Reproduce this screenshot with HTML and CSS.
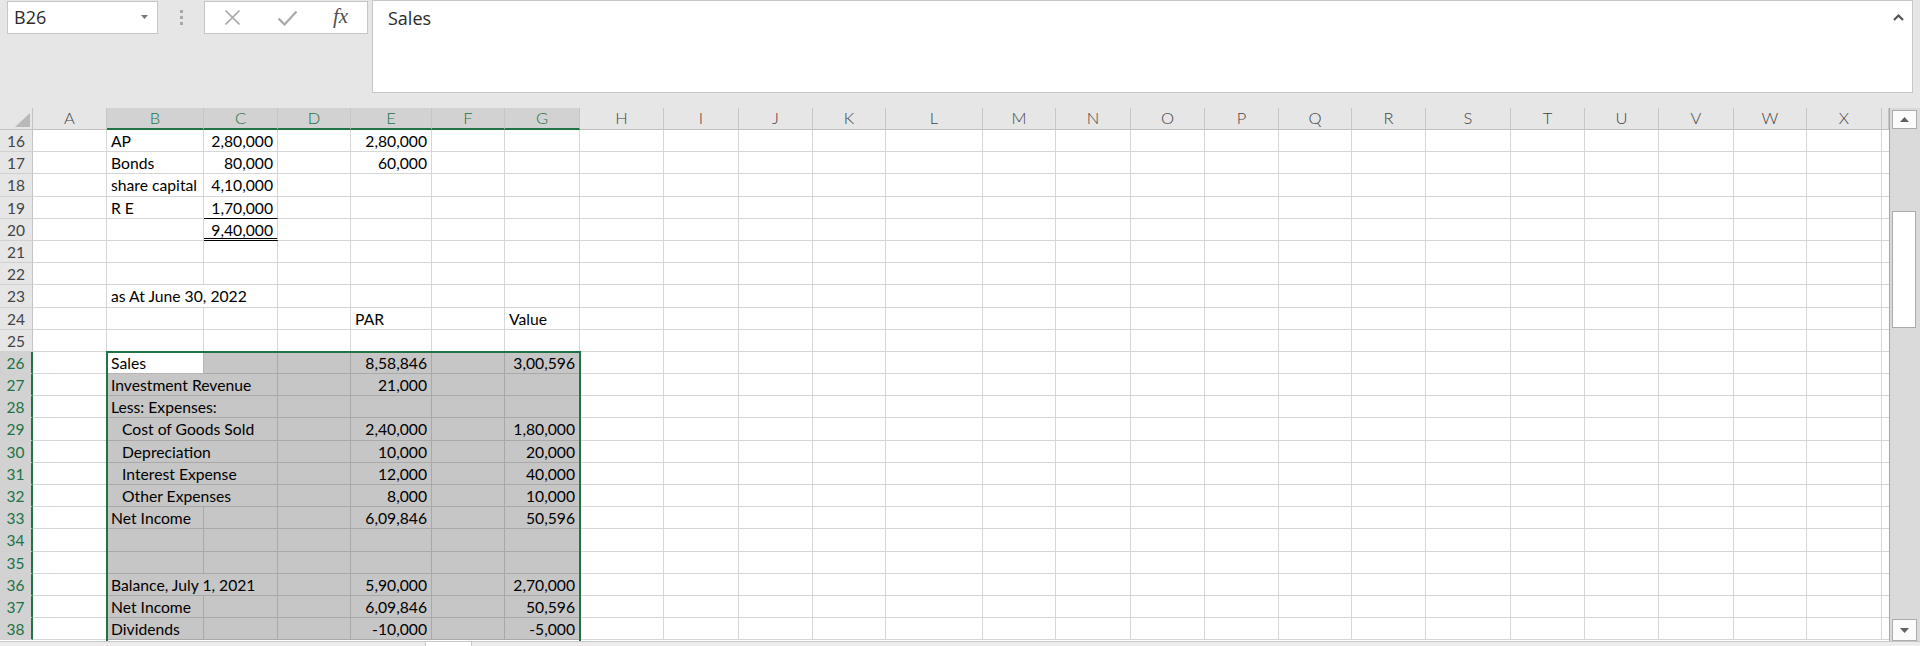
FILE: index.html
```html
<!DOCTYPE html>
<html lang="en">
<head>
<meta charset="utf-8">
<title>Excel - B26</title>
<link rel="stylesheet" href="styles.css">
</head>
<body>
<div class="app">
  <div class="toolbar">
    <div class="namebox">
      <span class="nb-val">B26</span>
      <svg class="caret" width="7" height="4" viewBox="0 0 7 4"><path d="M0 0h7L3.5 4z" fill="#777"/></svg>
    </div>
    <div class="grip"><b></b><b></b><b></b></div>
    <div class="btns">
      <div class="slot s1"><svg width="17" height="17" viewBox="0 0 17 17"><path d="M1.5 1.5l14 14M15.5 1.5l-14 14" stroke="#a8a8a8" stroke-width="1.7" fill="none"/></svg></div>
      <div class="slot s2"><svg width="21" height="16" viewBox="0 0 21 16"><path d="M1.5 8.5l6 6L19.5 1.5" stroke="#a8a8a8" stroke-width="2.2" fill="none"/></svg></div>
      <div class="slot s3"><span class="fx">fx</span></div>
    </div>
    <div class="formula">
      <span class="f-val">Sales</span>
      <svg class="chev" width="11" height="7" viewBox="0 0 11 7"><path d="M1 6l4.5-4.5L10 6" stroke="#555" stroke-width="2.2" fill="none"/></svg>
    </div>
  </div>

  <div class="main">
    <div class="sheet">
      <div class="corner"><svg width="15" height="14" viewBox="0 0 15 14"><path d="M15 0V14H0z" fill="#b9b9b9"/></svg></div>
      <div class="ch">A</div><div class="ch on">B</div><div class="ch on">C</div><div class="ch on">D</div><div class="ch on">E</div><div class="ch on">F</div><div class="ch on">G</div><div class="ch">H</div><div class="ch">I</div><div class="ch">J</div><div class="ch">K</div><div class="ch">L</div><div class="ch">M</div><div class="ch">N</div><div class="ch">O</div><div class="ch">P</div><div class="ch">Q</div><div class="ch">R</div><div class="ch">S</div><div class="ch">T</div><div class="ch">U</div><div class="ch">V</div><div class="ch">W</div><div class="ch">X</div><div class="ch"></div>

      <div class="rh">16</div><div></div><div>AP</div><div class="n">2,80,000</div><div></div><div class="n">2,80,000</div><div></div><div></div><div></div><div></div><div></div><div></div><div></div><div></div><div></div><div></div><div></div><div></div><div></div><div></div><div></div><div></div><div></div><div></div><div></div><div></div>
      <div class="rh">17</div><div></div><div>Bonds</div><div class="n">80,000</div><div></div><div class="n">60,000</div><div></div><div></div><div></div><div></div><div></div><div></div><div></div><div></div><div></div><div></div><div></div><div></div><div></div><div></div><div></div><div></div><div></div><div></div><div></div><div></div>
      <div class="rh">18</div><div></div><div>share capital</div><div class="n">4,10,000</div><div></div><div></div><div></div><div></div><div></div><div></div><div></div><div></div><div></div><div></div><div></div><div></div><div></div><div></div><div></div><div></div><div></div><div></div><div></div><div></div><div></div><div></div>
      <div class="rh">19</div><div></div><div>R E</div><div class="n u1">1,70,000</div><div></div><div></div><div></div><div></div><div></div><div></div><div></div><div></div><div></div><div></div><div></div><div></div><div></div><div></div><div></div><div></div><div></div><div></div><div></div><div></div><div></div><div></div>
      <div class="rh">20</div><div></div><div></div><div class="n u2">9,40,000</div><div></div><div></div><div></div><div></div><div></div><div></div><div></div><div></div><div></div><div></div><div></div><div></div><div></div><div></div><div></div><div></div><div></div><div></div><div></div><div></div><div></div><div></div>
      <div class="rh">21</div><div></div><div></div><div></div><div></div><div></div><div></div><div></div><div></div><div></div><div></div><div></div><div></div><div></div><div></div><div></div><div></div><div></div><div></div><div></div><div></div><div></div><div></div><div></div><div></div><div></div>
      <div class="rh">22</div><div></div><div></div><div></div><div></div><div></div><div></div><div></div><div></div><div></div><div></div><div></div><div></div><div></div><div></div><div></div><div></div><div></div><div></div><div></div><div></div><div></div><div></div><div></div><div></div><div></div>
      <div class="rh">23</div><div></div><div class="w2">as At June 30, 2022</div><div></div><div></div><div></div><div></div><div></div><div></div><div></div><div></div><div></div><div></div><div></div><div></div><div></div><div></div><div></div><div></div><div></div><div></div><div></div><div></div><div></div><div></div>
      <div class="rh">24</div><div></div><div></div><div></div><div></div><div>PAR</div><div></div><div>Value</div><div></div><div></div><div></div><div></div><div></div><div></div><div></div><div></div><div></div><div></div><div></div><div></div><div></div><div></div><div></div><div></div><div></div><div></div>
      <div class="rh">25</div><div></div><div></div><div></div><div></div><div></div><div></div><div></div><div></div><div></div><div></div><div></div><div></div><div></div><div></div><div></div><div></div><div></div><div></div><div></div><div></div><div></div><div></div><div></div><div></div><div></div>

      <div class="rh on">26</div><div></div><div class="act">Sales</div><div class="sel"></div><div class="sel"></div><div class="sel n">8,58,846</div><div class="sel"></div><div class="sel n">3,00,596</div><div></div><div></div><div></div><div></div><div></div><div></div><div></div><div></div><div></div><div></div><div></div><div></div><div></div><div></div><div></div><div></div><div></div><div></div>
      <div class="rh on">27</div><div></div><div class="sel w2">Investment Revenue</div><div class="sel"></div><div class="sel n">21,000</div><div class="sel"></div><div class="sel"></div><div></div><div></div><div></div><div></div><div></div><div></div><div></div><div></div><div></div><div></div><div></div><div></div><div></div><div></div><div></div><div></div><div></div><div></div>
      <div class="rh on">28</div><div></div><div class="sel w2">Less: Expenses:</div><div class="sel"></div><div class="sel"></div><div class="sel"></div><div class="sel"></div><div></div><div></div><div></div><div></div><div></div><div></div><div></div><div></div><div></div><div></div><div></div><div></div><div></div><div></div><div></div><div></div><div></div><div></div>
      <div class="rh on">29</div><div></div><div class="sel w2 ind">Cost of Goods Sold</div><div class="sel"></div><div class="sel n">2,40,000</div><div class="sel"></div><div class="sel n">1,80,000</div><div></div><div></div><div></div><div></div><div></div><div></div><div></div><div></div><div></div><div></div><div></div><div></div><div></div><div></div><div></div><div></div><div></div><div></div>
      <div class="rh on">30</div><div></div><div class="sel w2 ind">Depreciation</div><div class="sel"></div><div class="sel n">10,000</div><div class="sel"></div><div class="sel n">20,000</div><div></div><div></div><div></div><div></div><div></div><div></div><div></div><div></div><div></div><div></div><div></div><div></div><div></div><div></div><div></div><div></div><div></div><div></div>
      <div class="rh on">31</div><div></div><div class="sel w2 ind">Interest Expense</div><div class="sel"></div><div class="sel n">12,000</div><div class="sel"></div><div class="sel n">40,000</div><div></div><div></div><div></div><div></div><div></div><div></div><div></div><div></div><div></div><div></div><div></div><div></div><div></div><div></div><div></div><div></div><div></div><div></div>
      <div class="rh on">32</div><div></div><div class="sel w2 ind">Other Expenses</div><div class="sel"></div><div class="sel n">8,000</div><div class="sel"></div><div class="sel n">10,000</div><div></div><div></div><div></div><div></div><div></div><div></div><div></div><div></div><div></div><div></div><div></div><div></div><div></div><div></div><div></div><div></div><div></div><div></div>
      <div class="rh on">33</div><div></div><div class="sel">Net Income</div><div class="sel"></div><div class="sel"></div><div class="sel n">6,09,846</div><div class="sel"></div><div class="sel n">50,596</div><div></div><div></div><div></div><div></div><div></div><div></div><div></div><div></div><div></div><div></div><div></div><div></div><div></div><div></div><div></div><div></div><div></div><div></div>
      <div class="rh on">34</div><div></div><div class="sel"></div><div class="sel"></div><div class="sel"></div><div class="sel"></div><div class="sel"></div><div class="sel"></div><div></div><div></div><div></div><div></div><div></div><div></div><div></div><div></div><div></div><div></div><div></div><div></div><div></div><div></div><div></div><div></div><div></div><div></div>
      <div class="rh on">35</div><div></div><div class="sel"></div><div class="sel"></div><div class="sel"></div><div class="sel"></div><div class="sel"></div><div class="sel"></div><div></div><div></div><div></div><div></div><div></div><div></div><div></div><div></div><div></div><div></div><div></div><div></div><div></div><div></div><div></div><div></div><div></div><div></div>
      <div class="rh on">36</div><div></div><div class="sel w2">Balance, July 1, 2021</div><div class="sel"></div><div class="sel n">5,90,000</div><div class="sel"></div><div class="sel n">2,70,000</div><div></div><div></div><div></div><div></div><div></div><div></div><div></div><div></div><div></div><div></div><div></div><div></div><div></div><div></div><div></div><div></div><div></div><div></div>
      <div class="rh on">37</div><div></div><div class="sel">Net Income</div><div class="sel"></div><div class="sel"></div><div class="sel n">6,09,846</div><div class="sel"></div><div class="sel n">50,596</div><div></div><div></div><div></div><div></div><div></div><div></div><div></div><div></div><div></div><div></div><div></div><div></div><div></div><div></div><div></div><div></div><div></div><div></div>
      <div class="rh on">38</div><div></div><div class="sel">Dividends</div><div class="sel"></div><div class="sel"></div><div class="sel n">-10,000</div><div class="sel"></div><div class="sel n">-5,000</div><div></div><div></div><div></div><div></div><div></div><div></div><div></div><div></div><div></div><div></div><div></div><div></div><div></div><div></div><div></div><div></div><div></div><div></div>

      <span class="selbox"></span>
    </div>
    <div class="vscroll">
      <div class="sb-btn up"><svg width="9" height="5" viewBox="0 0 9 5"><path d="M0 5L4.5 0 9 5z" fill="#606060"/></svg></div>
      <div class="thumb"></div>
      <div class="track"></div>
      <div class="sb-btn down"><svg width="9" height="5" viewBox="0 0 9 5"><path d="M0 0h9L4.5 5z" fill="#606060"/></svg></div>
    </div>
  </div>

  <div class="tabs"><div class="tab"></div></div>
</div>
</body>
</html>
```

FILE: styles.css
```css
* { box-sizing: border-box; }

body {
  margin: 0;
  background: #e6e6e6;
  font-family: "Lato", "Liberation Sans", sans-serif;
  overflow: hidden;
}

.app {
  width: 1920px;
  height: 646px;
  display: flex;
  flex-direction: column;
}

/* ---------- formula toolbar ---------- */
.toolbar {
  flex: none;
  height: 108px;
  display: flex;
  align-items: flex-start;
}

.namebox {
  margin: 1px 0 0 7px;
  width: 151px;
  height: 33px;
  background: #fff;
  border: 1px solid #c6c6c6;
  display: flex;
  align-items: flex-start;
  padding-left: 6px;
  font-family: "Open Sans", "Noto Sans", sans-serif;
  font-size: 18px;
  line-height: 31px;
  color: #2b2b2b;
}
.nb-val { flex: 1; }
.caret { margin: 13px 9px 0 0; }

.grip {
  width: 46px;
  display: flex;
  flex-direction: column;
  align-items: center;
  gap: 3px;
  padding-top: 10px;
}
.grip b {
  display: block;
  width: 3px;
  height: 3px;
  background: #a9a9a9;
}

.btns {
  margin-top: 1px;
  width: 164px;
  height: 33px;
  background: #fff;
  border: 1px solid #c6c6c6;
  display: flex;
}
.slot {
  display: flex;
  align-items: center;
  justify-content: center;
}
.s1 { width: 55px; }
.s2 { width: 54px; }
.s3 { width: 53px; }
.fx {
  font-family: "Liberation Serif", serif;
  font-style: italic;
  font-size: 21px;
  color: #505050;
  margin-top: -3px;
}

.formula {
  margin-left: 4px;
  width: 1541px;
  height: 93px;
  background: #fff;
  border: 1px solid #c6c6c6;
  display: flex;
  align-items: flex-start;
  padding-left: 15px;
  font-family: "Open Sans", "Noto Sans", sans-serif;
  font-size: 18px;
  line-height: 34px;
  color: #2b2b2b;
}
.f-val { flex: 1; }
.chev { margin: 13px 8px 0 0; }

/* ---------- sheet ---------- */
.main {
  flex: none;
  height: 533px;
  display: flex;
}

.sheet {
  position: relative;
  width: 1889px;
  height: 533px;
  overflow: hidden;
  background: #fff;
  display: grid;
  grid-template-columns:
    33px 74px 97px 74px 73px 81px 73px 75px
    84px 75px 74px 73px 97px 73px 75px 74px 74px 73px 74px 85px 74px 74px 75px 73px 75px 7px;
  grid-template-rows: 22px repeat(23, 22.2px);
  font-size: 15.7px;
  color: #000;
}

.sheet > div {
  border-right: 1px solid #d6d6d6;
  border-bottom: 1px solid #d6d6d6;
  padding: 1px 4px 0;
  line-height: 21px;
  white-space: nowrap;
  min-width: 0;
}

.sheet > .corner {
  background: #e6e6e6;
  border-right-color: #c4c4c4;
  border-bottom-color: #c4c4c4;
  padding: 0 2px 2px 0;
  display: flex;
  align-items: flex-end;
  justify-content: flex-end;
}

.sheet > .ch {
  background: #e6e6e6;
  border-right-color: #c6c6c6;
  border-bottom-color: #bfbfbf;
  padding: 0;
  text-align: center;
  color: #444;
  font-size: 16.5px;
  font-weight: 300;
}
.sheet > .ch.on {
  background: #d2d2d2;
  color: #217346;
  border-bottom: 2px solid #217346;
}

.sheet > .rh {
  background: #e6e6e6;
  border-right-color: #c4c4c4;
  border-bottom-color: #d0d0d0;
  padding: 1px 0 0;
  text-align: center;
  color: #444;
  font-size: 15.5px;
}
.sheet > .rh.on {
  background: #d2d2d2;
  color: #217346;
  border-right: 2px solid #217346;
}

.sheet > .n { text-align: right; }
.sheet > .w2 { grid-column: span 2; }
.sheet > .ind { padding-left: 15px; }

.sheet > .sel {
  background: #c6c6c6;
  border-color: #a9a9a9;
}
.sheet > .act {
  background: #fff;
  border-color: #b5b5b5;
}

.sheet > .u1 { border-bottom: 1px solid #000; }
.sheet > .u2 { border-bottom: 3px double #000; }

.selbox {
  position: absolute;
  left: 106px;
  top: 243px;
  width: 475px;
  height: 400px;
  border: 2px solid #217346;
  pointer-events: none;
}

/* ---------- vertical scrollbar ---------- */
.vscroll {
  width: 31px;
  background: #dadada;
  border-left: 1px solid #a6a6a6;
  display: flex;
  flex-direction: column;
  padding-left: 2px;
}
.sb-btn {
  width: 25px;
  background: #fbfbfb;
  border: 1px solid #ababab;
  display: flex;
  align-items: center;
  justify-content: center;
}
.sb-btn.up { margin-top: 2px; height: 19px; }
.sb-btn.down { height: 22px; }
.thumb {
  margin-top: 82px;
  width: 24px;
  height: 117px;
  background: #fff;
  border: 1px solid #ababab;
}
.track { flex: 1; }

/* ---------- sheet tabs strip ---------- */
.tabs {
  flex: none;
  height: 5px;
  border-top: 1px solid #c6c6c6;
  background: #ececec;
  display: flex;
}
.tab {
  margin-left: 425px;
  width: 47px;
  background: #fff;
  border-left: 1px solid #c6c6c6;
  border-right: 1px solid #c6c6c6;
}
```
